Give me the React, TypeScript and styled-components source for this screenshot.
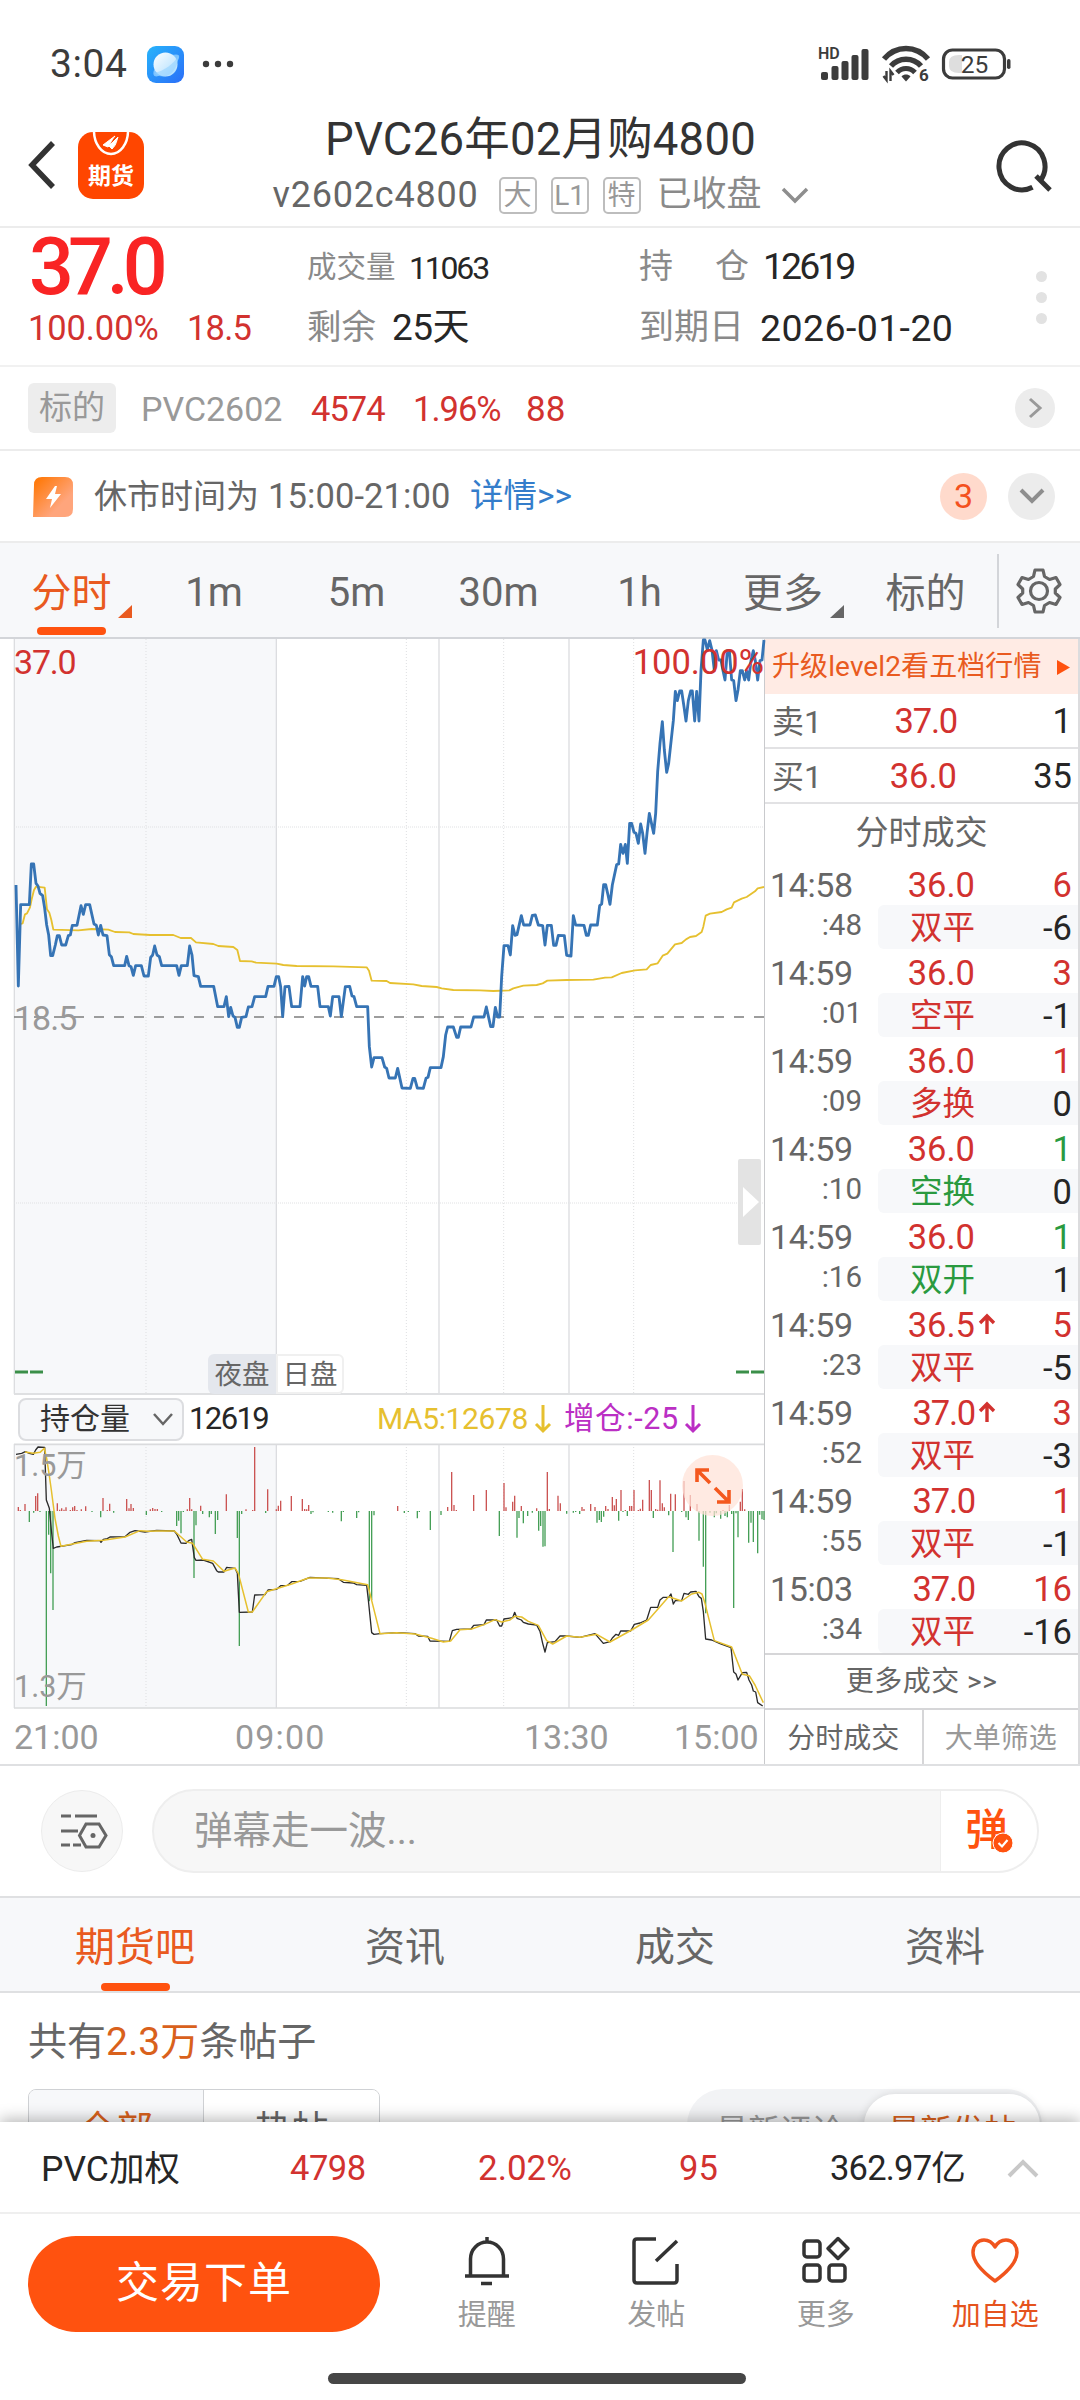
import React from 'react';
import styled, { createGlobalStyle, css } from 'styled-components';

const C = {
  red: '#d2322f',
  green: '#2a9a3f',
  orange: '#e95a20',
  accent: '#ff520f',
  ink: '#262626',
  mid: '#666666',
  soft: '#8a8a8a',
  mute: '#999999',
  line: '#dfe0e2',
  pane: '#f7f8fa',
  blue: '#3674b5',
  yellow: '#e6c02f',
  purple: '#bb2fc4',
};

const Global = createGlobalStyle`
  * { box-sizing: border-box; }
  html, body { margin: 0; padding: 0; background: #fff; }
  body { font-family: Roboto, "Noto Sans CJK SC", sans-serif; }
  svg { display: block; flex: none; overflow: visible; }
`;

const Page = styled.main`
  width: 1080px;
  height: 2400px;
  overflow: hidden;
  display: flex;
  flex-direction: column;
  background: #fff;
  position: relative;
`;

interface TextProps { $size?: number; $color?: string; $ls?: number; $weight?: number; $ml?: number; $w?: number; $align?: string }
const Text = styled.span<TextProps>`
  display: block;
  flex: none;
  white-space: nowrap;
  line-height: 1.2;
  font-size: ${p => p.$size ?? 34}px;
  color: ${p => p.$color ?? C.mid};
  letter-spacing: ${p => p.$ls ?? 0}px;
  font-weight: ${p => p.$weight ?? 400};
  margin-left: ${p => p.$ml ?? 0}px;
  ${p => p.$w !== undefined && css`width: ${p.$w}px;`}
  text-align: ${p => p.$align ?? 'left'};
`;

/* ---------- status bar ---------- */
const StatusBar = styled.header`
  height: 100px;
  flex: none;
  display: flex;
  align-items: center;
  padding: 28px 68px 0 50px;
`;
const Spacer = styled.div`flex: 1;`;
const AppDot = styled.div`margin: 0 18px 0 20px;`;
const StatusIcons = styled.div`display: flex; align-items: center; gap: 12px;`;

/* ---------- title ---------- */
const TitleBar = styled.div`
  height: 128px;
  flex: none;
  display: flex;
  border-bottom: 2px solid #ececec;
  padding: 0 27px 0 28px;
`;
const TitleSide = styled.div<{ $right?: boolean }>`
  width: 130px;
  display: flex;
  align-items: center;
  gap: 21px;
  padding-top: 4px;
  justify-content: ${p => (p.$right ? 'flex-end' : 'flex-start')};
`;
const TitleMid = styled.div`
  flex: 1;
  display: flex;
  flex-direction: column;
  align-items: center;
  padding-top: 13px;
`;
const SubTitle = styled.div`
  display: flex;
  align-items: center;
  height: 43px;
  margin-top: 6px;
`;
const Badge = styled.span<{ $first?: boolean }>`
  width: 38px;
  height: 37px;
  border: 2px solid #bdbdbd;
  border-radius: 5px;
  margin-left: ${p => (p.$first ? 20 : 14)}px;
  font-size: 28px;
  line-height: 33px;
  color: ${C.mute};
  text-align: center;
  white-space: nowrap;
`;
const Logo = styled.div`
  width: 66px;
  height: 67px;
  border-radius: 15px;
  background: #ff4600;
  overflow: hidden;
  display: flex;
  flex-direction: column;
  align-items: center;
`;
const LogoText = styled.span`
  color: #fff;
  font-size: 23px;
  font-weight: 700;
  line-height: 30px;
  margin-top: 3px;
`;

/* ---------- quote ---------- */
const Quote = styled.section`
  height: 139px;
  flex: none;
  display: grid;
  grid-template-columns: 279px 332px 390px 1fr;
  padding: 0 30px 0 28px;
  border-bottom: 2px solid #f1f1f1;
`;
const QuoteCol = styled.div<{ $top: number; $gap: number }>`
  display: flex;
  flex-direction: column;
  padding-top: ${p => p.$top}px;
  gap: ${p => p.$gap}px;
`;
const Line = styled.div`display: flex; align-items: center; height: 44px;`;
const BigPrice = styled.div`
  font-size: 79px;
  line-height: 78px;
  letter-spacing: -6px;
  font-weight: 500;
  padding-left: 1px;
  color: #f92424;
`;
const Dots = styled.div`
  display: flex;
  flex-direction: column;
  align-items: center;
  gap: 10px;
  padding: 43px 16px 0 0;
  justify-self: end;
  margin-right: -13px;
`;
const Dot = styled.i`width: 11px; height: 11px; border-radius: 50%; background: #e2e2e2;`;

const Row = styled.section<{ $h: number; $top?: number }>`
  height: ${p => p.$h}px;
  flex: none;
  display: flex;
  align-items: center;
  padding: 0 25px 0 28px;
  padding-top: ${p => p.$top ?? 0}px;
  border-bottom: 2px solid #ececec;
`;
const Figures = styled.div`display: flex; padding-top: 3px;`;
const Tag = styled.span`
  width: 88px;
  height: 50px;
  border-radius: 6px;
  background: #ededed;
  color: ${C.mute};
  font-size: 33px;
  line-height: 50px;
  text-align: center;
`;
const Round = styled.span<{ $d: number; $bg?: string; $mr?: number }>`
  width: ${p => p.$d}px;
  height: ${p => p.$d}px;
  border-radius: 50%;
  background: ${p => p.$bg ?? '#ececec'};
  display: flex;
  align-items: center;
  justify-content: center;
  margin-right: ${p => p.$mr ?? 0}px;
`;

/* ---------- period tabs ---------- */
const Periods = styled.nav`
  height: 96px;
  flex: none;
  display: grid;
  grid-template-columns: 143px 142px 143px 141px 141px 160px 127px 1fr;
  background: ${C.pane};
  border-bottom: 2px solid #d3d5d9;
`;
const Period = styled.div<{ $on?: boolean; $cjk?: boolean; $pr?: number }>`
  position: relative;
  display: flex;
  align-items: center;
  justify-content: center;
  padding-top: ${p => (p.$cjk ? 0 : 5)}px;
  padding-right: ${p => p.$pr ?? 0}px;
  font-size: 40px;
  color: ${p => (p.$on ? C.orange : C.mid)};
`;
const Corner = styled.i<{ $right: number }>`
  position: absolute;
  right: ${p => p.$right}px;
  top: 62px;
  border-bottom: 13px solid currentColor;
  border-left: 14px solid transparent;
`;
const Underline = styled.i<{ $left: string; $bottom: number }>`
  position: absolute;
  left: ${p => p.$left};
  bottom: ${p => p.$bottom}px;
  width: 69px;
  height: 8px;
  border-radius: 4px;
  background: ${C.accent};
`;
const GearCell = styled.div`
  display: flex;
  align-items: center;
  justify-content: center;
  border-left: 2px solid #d3d5d9;
  margin: 11px 1px 9px 0;
`;

/* ---------- market ---------- */
const Market = styled.section`
  height: 1127px;
  flex: none;
  display: grid;
  grid-template-columns: 750px 316px;
  padding-left: 14px;
  border-bottom: 2px solid ${C.line};
`;
const Charts = styled.div`display: flex; flex-direction: column; position: relative; min-width: 0;`;
const Overlay = styled.div<{ $x?: number; $r?: number; $y: number }>`
  position: absolute;
  ${p => (p.$r !== undefined ? `right: ${p.$r}px;` : `left: ${p.$x ?? 0}px;`)}
  top: ${p => p.$y}px;
`;
const Session = styled.div`display: flex;`;
const SessionTag = styled.span<{ $night?: boolean }>`
  width: 68px;
  height: 40px;
  font-size: 27.5px;
  line-height: 41px;
  text-align: center;
  color: ${C.mid};
  border-radius: ${p => (p.$night ? '6px 0 0 6px' : '0 6px 6px 0')};
  background: ${p => (p.$night ? '#e4e7ed' : '#fff')};
  box-shadow: ${p => (p.$night ? 'none' : 'inset 0 0 0 2px #f0f0f0')};
`;
const Handle = styled.div`
  width: 23px;
  height: 86px;
  border-radius: 2px;
  background: #e3e3e3;
  display: flex;
  align-items: center;
  padding-left: 5px;
`;
const Indicator = styled.div`
  height: 48px;
  display: flex;
  align-items: center;
  padding-left: 4px;
`;
const Select = styled.div`
  width: 166px;
  height: 43px;
  border: 2px solid #dcdde0;
  border-radius: 8px;
  background: ${C.pane};
  display: flex;
  align-items: center;
  justify-content: space-between;
  padding: 0 8px 0 20px;
  margin-right: 5px;
`;
const Axis = styled.div`
  flex: 1;
  display: grid;
  grid-template-columns: 221px 289px 150px 1fr;
  align-items: center;
`;
const ExpandBtn = styled.div`
  width: 61px;
  height: 61px;
  border-radius: 50%;
  background: rgba(255, 226, 215, 0.72);
`;

const Panel = styled.aside`
  display: flex;
  flex-direction: column;
  border-left: 1px solid #c9cacd;
  border-right: 2px solid #dcdcde;
`;
const Banner = styled.div`
  height: 55px;
  display: flex;
  align-items: center;
  background: #ffebe4;
  padding: 1px 8px 0 7px;
`;
const Level = styled.div`
  height: 55px;
  display: grid;
  grid-template-columns: 56px 129px 1fr;
  align-items: center;
  border-bottom: 2px solid #e2e2e4;
  padding: 3px 6px 0 7px;
`;
const PanelTitle = styled.div`
  height: 57px;
  display: flex;
  align-items: center;
  justify-content: center;
`;
const Tick = styled.div`
  height: 88px;
  display: grid;
  grid-template-columns: 113px 1fr;
  grid-template-rows: 44px 44px;
`;
const TickTime = styled.div<{ $sub?: boolean }>`
  display: flex;
  align-items: center;
  justify-content: ${p => (p.$sub ? 'flex-end' : 'flex-start')};
  padding: ${p => (p.$sub ? '0 16px 2px 0' : '4px 0 0 5px')};
`;
const TickData = styled.div<{ $sub?: boolean }>`
  display: grid;
  grid-template-columns: 97px 20px 1fr;
  align-items: center;
  padding: 0 6px 0 0;
  padding-top: ${p => (p.$sub ? 3 : 4)}px;
  background: ${p => (p.$sub ? C.pane : 'transparent')};
  border-radius: 6px 0 0 6px;
`;
const MoreTrades = styled.div`
  height: 55px;
  display: flex;
  align-items: center;
  justify-content: center;
  border-top: 2px solid #d6d6d8;
`;
const PanelTabs = styled.div`
  flex: 1;
  display: grid;
  grid-template-columns: 1fr 1fr;
  border-top: 2px solid #d6d6d8;
`;
const PanelTab = styled.div<{ $on?: boolean }>`
  display: flex;
  align-items: center;
  justify-content: center;
  font-size: 28px;
  padding-bottom: 3px;
  color: ${p => (p.$on ? C.mid : C.mute)};
  border-left: ${p => (p.$on ? '0' : '2px solid #d6d6d8')};
`;

/* ---------- comments ---------- */
const Danmu = styled.section`
  height: 130px;
  flex: none;
  display: flex;
  align-items: center;
  padding: 0 41px;
`;
const SettingBtn = styled.div`
  width: 82px;
  height: 82px;
  border-radius: 50%;
  background: #f7f7f7;
  border: 1px solid #ececec;
  display: flex;
  align-items: center;
  justify-content: center;
  padding-left: 4px;
`;
const InputBox = styled.div`
  flex: 1;
  height: 84px;
  margin-left: 29px;
  border: 2px solid #eeeeee;
  border-radius: 42px;
  background: #f7f7f7;
  display: flex;
  align-items: center;
  justify-content: space-between;
  padding-left: 40px;
  overflow: hidden;
`;
const Bullet = styled.div`
  position: relative;
  width: 97px;
  height: 80px;
  background: #fff;
  border-left: 1px solid #eee;
  font-size: 43px;
  font-weight: 500;
  line-height: 78px;
  padding-left: 24px;
  color: ${C.accent};
`;
const BulletMark = styled.div`position: absolute; left: 52px; top: 42px;`;
const BarTabs = styled.nav`
  height: 97px;
  flex: none;
  display: grid;
  grid-template-columns: repeat(4, 1fr);
  background: ${C.pane};
  border-top: 2px solid ${C.line};
  border-bottom: 2px solid ${C.line};
`;
const BarTab = styled.div<{ $on?: boolean }>`
  position: relative;
  display: flex;
  align-items: center;
  justify-content: center;
  font-size: 40px;
  padding-bottom: 2px;
  color: ${p => (p.$on ? C.orange : C.mid)};
`;
const PostCount = styled.div`
  font-size: 39px;
  line-height: 46px;
  color: ${C.mid};
  padding: 26px 0 0 28px;
  height: 96px;
  flex: none;
  em { font-style: normal; color: #d9611c; }
`;
const Filters = styled.div`
  display: flex;
  justify-content: space-between;
  padding: 0 38px 0 28px;
`;
const Segments = styled.div`
  width: 352px;
  height: 70px;
  border: 1px solid #cfd1d4;
  border-radius: 8px;
  display: grid;
  grid-template-columns: 1fr 1fr;
  overflow: hidden;
`;
const Segment = styled.div<{ $on?: boolean }>`
  font-size: 37px;
  line-height: 81px;
  text-align: center;
  color: ${p => (p.$on ? '#d9611c' : C.mid)};
  background: ${p => (p.$on ? C.pane : '#fff')};
  border-right: ${p => (p.$on ? '1px solid #cfd1d4' : '0')};
`;
const SortPill = styled.div`
  width: 355px;
  height: 72px;
  border-radius: 36px;
  background: #f2f3f5;
  display: grid;
  grid-template-columns: 177px 176px;
  padding-top: 5px;
`;
const SortItem = styled.div<{ $on?: boolean }>`
  height: 62px;
  border-radius: 31px;
  font-size: 32px;
  line-height: 74px;
  text-align: center;
  white-space: nowrap;
  color: ${p => (p.$on ? '#d9611c' : C.mute)};
  background: ${p => (p.$on ? '#fff' : 'transparent')};
  box-shadow: ${p => (p.$on ? '0 0 8px rgba(0,0,0,.12)' : 'none')};
  padding-left: ${p => (p.$on ? 0 : 9)}px;
`;

/* ---------- bottom ---------- */
const Dock = styled.footer`
  position: absolute;
  left: 0;
  right: 0;
  bottom: 0;
  height: 278px;
  background: #fff;
  box-shadow: 0 -3px 14px rgba(0, 0, 0, 0.28);
  display: flex;
  flex-direction: column;
`;
const IndexRow = styled.div`
  height: 92px;
  display: grid;
  grid-template-columns: 249px 188px 201px 151px 177px 1fr;
  align-items: center;
  padding: 4px 0 0 41px;
  border-bottom: 2px solid #efefef;
`;
const Actions = styled.div`
  height: 140px;
  display: grid;
  grid-template-columns: 352px 1fr;
  padding: 22px 0 22px 28px;
`;
const OrderBtn = styled.div`
  height: 96px;
  border-radius: 48px;
  background: ${C.accent};
  color: #fff;
  font-size: 43px;
  line-height: 94px;
  text-align: center;
  letter-spacing: 1px;
`;
const ActionList = styled.div`
  display: grid;
  grid-template-columns: repeat(4, 169.5px);
  padding-left: 22px;
`;
const Action = styled.div<{ $on?: boolean }>`
  display: flex;
  flex-direction: column;
  align-items: center;
  gap: 11px;
  font-size: 29px;
  line-height: 36px;
  color: ${p => (p.$on ? '#e5531d' : C.mute)};
`;
const HomeBar = styled.div`
  width: 418px;
  height: 11px;
  border-radius: 6px;
  background: #464646;
  margin: 19px 0 0 328px;
`;

/* ---------- chart data ---------- */
const join = (early: string, late: string) =>
  [
    ...early.split(' ').map(p => p.split(',').map(Number)),
    ...late.split(' ').map(p => { const [x, y] = p.split(',').map(Number); return [x + 1140, y]; }),
  ];
const toPoints = (pts: number[][]) => pts.map(p => p.join(',')).join(' ');

const price = toPoints(join(
  '48,765 55,1068 62,824 88,824 94,702 101,702 108,760 114,768 120,790 128,797 134,835 140,885 146,915 152,977 158,977 166,945 172,917 178,917 185,945 197,945 205,917 211,915 217,886 231,886 243,827 250,853 257,824 269,824 282,882 289,886 295,915 302,886 309,915 321,917 328,974 334,980 341,1007 374,1007 380,979 387,1007 393,1010 400,1036 407,1007 424,1007 432,1038 445,1038 452,982 458,975 464,948 471,975 478,980 485,1007 530,1007 537,1036 544,1007 562,1007 569,948 576,975 582,1037 595,1040 602,1069 641,1069 653,1130 672,1130 679,1100 686,1160 692,1132 699,1158 705,1162 712,1192 718,1192 725,1162 738,1160 745,1131 756,1130 764,1100 797,1100 804,1069 822,1069 829,1040 836,1040 842,1070 848,1160 855,1070 867,1069 875,1130 900,1130 908,1040 914,1068 920,1040 926,1040 933,1069 953,1069 960,1130 985,1130 991,1158 998,1100 1017,1100 1024,1160 1036,1070 1049,1069 1056,1098 1062,1100 1070,1130 1103,1130 1108,1250 1115,1311 1122,1283 1146,1283 1154,1311 1160,1315 1167,1344 1186,1344',
  '53,1315 66,1374 91,1375 99,1345 104,1345 112,1374 130,1375 138,1345 144,1342 151,1313 183,1313 190,1280 197,1215 203,1191 220,1191 230,1222 235,1222 242,1191 273,1191 281,1161 312,1161 319,1131 326,1163 332,1190 339,1190 346,1132 353,1161 359,1161 365,1040 372,947 384,947 391,975 398,887 405,916 411,914 424,857 431,885 450,885 457,856 466,855 475,885 488,887 495,945 502,886 514,886 521,946 528,946 535,916 553,917 560,976 573,978 580,857 587,885 612,886 619,916 625,916 632,885 652,885 659,827 665,822 671,764 677,764 684,795 690,823 697,765 710,704 716,702 722,643 729,670 736,643 742,700 749,580 755,580 762,607 768,610 775,640 782,582 788,610 795,670 801,610 808,550 821,610 827,550 833,425 840,340 847,275 853,360 860,427 866,400 880,272 886,184 892,212 899,183 905,183 912,230 918,273 925,212 932,183 937,183 944,273 950,184 957,273 963,122 970,30 975,30 982,60 989,32 996,60 1003,122 1009,62 1016,90 1023,90 1029,122 1035,150 1042,62 1048,62 1055,150 1061,152 1068,212 1074,180 1081,122 1087,122 1094,150 1100,122 1106,150 1113,92 1120,62 1126,92 1133,150 1140,92 1146,90 1152,30',
));
const average = toPoints(join(
  '62,882 68,880 75,853 81,850 90,832 95,808 102,780 108,770 134,773 141,838 148,848 154,870 160,899 235,901 275,897 325,899 345,906 388,907 400,912 450,915 520,915 542,924 573,924 588,937 640,942 655,948 700,951 712,960 720,993 755,994 768,998 830,1001 850,1005 890,1008 1000,1009 1100,1012 1107,1022 1115,1052 1160,1053',
  '30,1059 100,1063 125,1068 170,1071 185,1075 220,1080 300,1081 340,1083 388,1081 400,1075 430,1067 470,1065 488,1060 502,1052 560,1050 640,1049 675,1043 695,1042 725,1029 765,1021 800,1018 812,1005 833,1000 848,977 862,971 885,943 905,939 918,928 930,921 948,918 965,906 970,890 977,857 990,851 1025,846 1040,838 1055,833 1062,817 1085,806 1100,801 1125,784 1133,775 1152,771',
));
const openInterest = toPoints(join(
  '48,73 65,70 76,65 88,70 100,73 107,60 114,51 134,52 139,210 148,235 154,300 160,355 170,351 215,344 225,338 260,331 300,332 303,337 310,328 322,326 330,321 375,320 390,307 405,302 435,306 470,301 523,303 530,312 543,339 558,340 566,332 575,328 583,383 588,391 610,390 638,400 650,422 655,426 672,426 680,412 705,415 712,430 718,547 757,546 764,495 795,494 804,480 830,478 842,467 863,466 875,455 900,454 930,442 1015,446 1030,457 1060,459 1070,464 1100,466 1105,510 1115,608 1122,613 1140,611',
  '55,608 105,611 115,618 143,619 150,633 208,634 217,602 230,598 273,597 281,586 312,584 319,570 350,570 359,588 365,588 372,567 398,563 404,547 411,565 424,570 430,577 445,582 470,585 480,604 488,640 495,666 502,638 525,635 540,618 560,618 600,622 645,611 670,640 690,635 697,624 708,613 716,616 722,603 752,603 763,583 780,579 800,570 812,532 833,532 840,510 850,502 866,502 873,492 880,522 886,512 905,512 912,490 925,493 932,486 948,484 957,500 964,505 970,545 977,627 995,630 1020,641 1053,653 1061,726 1068,732 1074,750 1087,728 1100,727 1107,750 1115,765 1120,783 1127,786 1133,818 1148,828',
));
const ma5 = toPoints(join(
  '75,66 100,70 120,67 133,55 140,85 147,130 154,180 165,265 175,318 183,349 260,334 310,331 375,321 420,302 445,304 470,303 523,303 560,336 578,340 608,388 640,393 672,424 705,414 715,430 745,546 757,546 800,485 875,462 925,444 980,444 1025,449 1103,464 1140,611',
  '50,608 105,612 155,625 190,636 212,633 240,599 275,597 312,584 345,569 365,576 390,570 404,559 425,561 445,574 475,586 500,632 518,642 560,618 600,622 650,613 690,636 755,600 805,570 866,500 905,513 935,492 957,487 966,492 975,520 1003,632 1055,651 1087,733 1108,737 1125,765 1150,818',
));
const rises = join(
  '55,231 61,240 75,222 107,198 113,190 172,220 179,239 185,235 192,239 198,232 211,240 218,232 224,228 231,240 244,238 257,229 309,204 322,240 329,221 380,207 387,235 393,222 400,234 451,238 458,234 465,237 472,237 562,238 569,204 575,238 602,227 679,193 738,238 758,240 764,51 803,178 829,238 835,227 842,212 874,198 907,207 914,237 920,238 926,225',
  '53,228 203,231 215,126 222,225 229,240 281,195 319,180 372,159 378,232 398,215 404,197 424,228 470,235 502,126 508,237 534,197 541,220 606,231 612,237 632,222 645,231 677,228 684,237 697,201 703,226 709,207 723,180 736,240 749,228 755,228 762,180 775,240 781,236 788,209 808,150 814,180 827,237 833,239 840,151 847,220 853,232 872,191 886,193 912,153 931,195 951,222 1029,240 1048,225 1081,215 1087,177 1094,238',
);
const falls = join(
  '88,276 101,248 120,246 139,828 146,314 152,430 159,540 276,246 302,262 341,248 439,255 485,246 530,288 536,272 543,310 550,246 582,444 588,286 608,252 628,262 634,252 646,312 653,270 712,324 718,648 725,252 797,249 933,252 939,247 985,246 998,248 1024,274 1030,246 1070,264 1076,247 1108,514 1115,510 1122,256',
  '73,249 85,246 112,265 118,246 151,300 183,255 358,318 411,323 417,264 430,280 443,258 457,248 476,302 482,288 489,350 495,349 560,251 580,248 587,246 599,252 651,278 658,270 664,276 671,260 716,272 729,246 742,258 820,264 866,256 879,366 905,246 918,262 925,270 957,332 970,410 977,550 990,248 1003,262 1009,250 1022,266 1035,258 1042,262 1055,252 1061,534 1068,250 1074,322 1106,338 1113,278 1120,336 1133,370 1139,254 1146,268 1152,270',
);

const Grid = ({ top, bottom }: { top: number; bottom: number }) => (
  <g fill="none">
    <rect x="42" y={top} width="787" height={bottom - top} fill={C.pane} />
    {[438, 1219, 1511, 1901].map(x => (
      <line key={x} x1={x} x2={x} y1={top} y2={bottom} stroke="#dedfe1" strokeWidth="3" strokeDasharray="3 6" />
    ))}
    {[43, 829, 1317, 1707].map(x => (
      <line key={x} x1={x} x2={x} y1={top} y2={bottom} stroke="#dcdde0" strokeWidth="4" />
    ))}
  </g>
);

const PriceChart = () => (
  <svg width="751" height="756" viewBox="42 27 2253 2268">
    <Grid top={27} bottom={2292} />
    {[591, 1719].map(y => (
      <line key={y} x1="42" x2="2292" y1={y} y2={y} stroke="#e0e1e3" strokeWidth="3" strokeDasharray="3 3" />
    ))}
    <line x1="42" x2="2292" y1="1161" y2="1161" stroke="#7d7d7d" strokeWidth="5" strokeDasharray="30 30" />
    <line x1="42" x2="2292" y1="2292" y2="2292" stroke="#dfe0e2" strokeWidth="6" />
    <polyline points={average} fill="none" stroke={C.yellow} strokeWidth="5.5" strokeLinejoin="round" />
    <polyline points={price} fill="none" stroke={C.blue} strokeWidth="8.5" strokeLinejoin="round" />
  </svg>
);

const InterestChart = () => (
  <svg width="751" height="267" viewBox="42 39 2253 801">
    <Grid top={42} bottom={834} />
    <path d="M42 43H2292M42 834H2292" stroke="#dadbdd" strokeWidth="5" />
    {rises.map(([x, y]) => <line key={x} x1={x} x2={x} y1={y} y2="243" stroke="#cb5453" strokeWidth="4" />)}
    {falls.map(([x, y]) => <line key={x} x1={x} x2={x} y1="243" y2={y} stroke="#469f57" strokeWidth="4" />)}
    <polyline points={openInterest} fill="none" stroke="#2b2b2b" strokeWidth="4" strokeLinejoin="round" />
    <polyline points={ma5} fill="none" stroke={C.yellow} strokeWidth="4.5" strokeLinejoin="round" />
  </svg>
);

const Chevron = ({ d, w, h, color, sw = 3 }: { d: string; w: number; h: number; color: string; sw?: number }) => (
  <svg width={w} height={h} viewBox={`0 0 ${w} ${h}`} fill="none" stroke={color} strokeWidth={sw}><path d={d} /></svg>
);

const trades = [
  ['14:58', '36.0', '6', ':48', '双平', '-6'],
  ['14:59', '36.0', '3', ':01', '空平', '-1'],
  ['14:59', '36.0', '1', ':09', '多换', '0'],
  ['14:59', '36.0', '1', ':10', '空换', '0', 'down'],
  ['14:59', '36.0', '1', ':16', '双开', '1', 'down'],
  ['14:59', '36.5', '5', ':23', '双平', '-5', 'up'],
  ['14:59', '37.0', '3', ':52', '双平', '-3', 'up'],
  ['14:59', '37.0', '1', ':55', '双平', '-1'],
  ['15:03', '37.0', '16', ':34', '双平', '-16'],
];

const TradeRow = ({ t }: { t: string[] }) => {
  const tone = t[6] === 'down' ? C.green : C.red;
  const tight = t[1] === '37.0' ? -1.2 : 0;
  return (
    <Tick>
      <TickTime><Text $size={34} $ls={-0.4}>{t[0]}</Text></TickTime>
      <TickData>
        <Text $size={34.5} $color={C.red} $align="right" $ls={tight}>{t[1]}</Text>
        {t[6] === 'up' ? (
          <svg width="20" height="26" viewBox="0 0 20 26" fill="none" stroke={C.red} strokeWidth="3.4"><path d="M12 21V3M5 10l7-7 7 7" /></svg>
        ) : <i />}
        <Text $size={34.5} $color={tone} $align="right">{t[2]}</Text>
      </TickData>
      <TickTime $sub><Text $size={29.5}>{t[3]}</Text></TickTime>
      <TickData $sub>
        <Text $size={32.5} $color={tone} $align="right">{t[4]}</Text>
        <i />
        <Text $size={34.5} $color={C.ink} $align="right">{t[5]}</Text>
      </TickData>
    </Tick>
  );
};

export default function App() {
  return (
    <Page>
      <Global />
      <StatusBar>
        <Text $size={39} $color="#3c3c3c" $w={77} $ls={0.6}>3:04</Text>
        <AppDot>
          <svg width="37" height="37" viewBox="0 0 37 37">
            <defs>
              <linearGradient id="sky" x1="0" y1="0" x2="1" y2="1"><stop offset="0" stopColor="#27b4fb" /><stop offset="1" stopColor="#2b6ef8" /></linearGradient>
              <linearGradient id="planet" x1="0" y1="0" x2="1" y2="1"><stop offset="0" stopColor="#fff" /><stop offset="1" stopColor="#a9dcff" /></linearGradient>
            </defs>
            <rect width="37" height="37" rx="9" fill="url(#sky)" />
            <path d="M24 9c6-1 9-1 8 3-2 7-10 14-18 17-6 3-9 1-7-5" fill="#7cc3ff" />
            <circle cx="18.500" cy="18.500" r="12" fill="url(#planet)" />
            <path d="M7 27C17 25 27 18 31 10c1 8-5 20-14 20.500-4 .5-7-1-10-3.500z" fill="#8fd0ff" opacity=".55" />
          </svg>
        </AppDot>
        <svg width="32" height="8" viewBox="0 0 32 8" fill="#3c3c3c"><circle cx="4" cy="4" r="3.200" /><circle cx="16" cy="4" r="3.200" /><circle cx="28" cy="4" r="3.200" /></svg>
        <Spacer />
        <StatusIcons>
          <svg width="51" height="34" viewBox="0 0 51 34" fill="#3c3c3c">
            <text x="-1" y="12" fontSize="16" fontWeight="600" fontFamily="Roboto, sans-serif">HD</text>
            <rect x="2" y="25" width="7" height="8" rx="2" /><rect x="12.500" y="19" width="7" height="14" rx="2" />
            <rect x="22.500" y="14" width="7" height="19" rx="2" /><rect x="32.500" y="8" width="7" height="25" rx="2" /><rect x="42.500" y="2" width="7" height="31" rx="2" />
          </svg>
          <svg width="48" height="36" viewBox="0 0 48 36" fill="none" stroke="#3c3c3c">
            <path d="M2 13C14-1 34-1 46 13" strokeWidth="5.500" /><path d="M9 20c8-9 22-9 30 0" strokeWidth="5.500" /><path d="M15 26.500c5-5.500 13-5.500 18 0" strokeWidth="5" />
            <path d="M19.500 30.500c2.500-2.600 6.500-2.600 9 0L24 35.500z" fill="#3c3c3c" stroke="none" />
            <path d="M4.500 25v9l-3-4M8.500 35V25l3 4" strokeWidth="2.400" />
            <text x="37" y="35" fontSize="17" fontWeight="700" fill="#3c3c3c" stroke="none" fontFamily="Roboto, sans-serif">6</text>
          </svg>
          <svg width="70" height="32" viewBox="0 0 70 32">
            <rect x="1.500" y="2" width="61" height="28" rx="9" fill="none" stroke="#3c3c3c" strokeWidth="3.200" />
            <path d="M17 7h3v18h-3q-10 0-10-7v-4q0-7 10-7z" fill="#dedede" />
            <text x="32.500" y="24.500" fontSize="24.500" textAnchor="middle" fill="#3c3c3c" fontFamily="Roboto, sans-serif">25</text>
            <rect x="65" y="11" width="3.500" height="10" rx="1.700" fill="#3c3c3c" />
          </svg>
        </StatusIcons>
      </StatusBar>

      <TitleBar>
        <TitleSide>
          <Chevron d="M25 2L4 24L25 46" w={29} h={48} color="#333" sw={5.5} />
          <Logo>
            <svg width="44" height="27" viewBox="0 0 44 27" fill="none">
              <path d="M5 0a17 23 0 0 0 34 0" stroke="#fff" strokeWidth="2.500" transform="translate(0 -1)" />
              <path d="M14 13L26 4c-5 6-4 8-7 11zM20 14L29 5c-2 6-2 8-6 12z" fill="#fff" stroke="#fff" strokeWidth="1" />
            </svg>
            <LogoText>期货</LogoText>
          </Logo>
        </TitleSide>
        <TitleMid>
          <Text $size={45.5} $color="#333" $ls={0.2}>PVC26年02月购4800</Text>
          <SubTitle>
            <Text $size={36} $ls={0.8}>v2602c4800</Text>
            <Badge $first>大</Badge><Badge>L1</Badge><Badge>特</Badge>
            <Text $size={35} $color={C.soft} $ml={16}>已收盘</Text>
            <Text as="div" $ml={19}><Chevron d="M2 2L14 14L26 2" w={28} h={17} color="#8e8e8e" sw={3.5} /></Text>
          </SubTitle>
        </TitleMid>
        <TitleSide $right>
          <svg width="54" height="54" viewBox="0 0 54 54" fill="none" stroke="#333" strokeWidth="5">
            <path d="M33.500 49.300A23 23.500 0 1 1 41 43" /><path d="M37 38L51 52" />
          </svg>
        </TitleSide>
      </TitleBar>

      <Quote>
        <QuoteCol $top={0} $gap={1}>
          <BigPrice>37.0</BigPrice>
          <Line>
            <Text $size={34.5} $color={C.red} $ls={-0.1} $w={159}>100.00%</Text>
            <Text $size={34.5} $color={C.red} $ls={-0.8}>18.5</Text>
          </Line>
        </QuoteCol>
        <QuoteCol $top={18} $gap={16}>
          <Line><Text $size={29.5} $color={C.soft} $w={102}>成交量</Text><Text $size={32} $color={C.ink} $ls={-2.2}>11063</Text></Line>
          <Line><Text $size={34.5} $color={C.soft} $w={85}>剩余</Text><Text $size={37} $color={C.ink} $ls={-0.6}>25天</Text></Line>
        </QuoteCol>
        <QuoteCol $top={16} $gap={18}>
          <Line><Text $size={34} $color={C.soft} $w={76}>持</Text><Text $size={34} $color={C.soft} $w={48}>仓</Text><Text $size={37.5} $color={C.ink} $ls={-3}>12619</Text></Line>
          <Line><Text $size={35} $color={C.soft} $w={121}>到期日</Text><Text $size={37.5} $color={C.ink} $ls={0.4}>2026-01-20</Text></Line>
        </QuoteCol>
        <Dots><Dot /><Dot /><Dot /></Dots>
      </Quote>

      <Row $h={84}>
        <Tag>标的</Tag>
        <Figures>
          <Text $size={34} $color={C.mute} $ml={25} $w={170}>PVC2602</Text>
          <Text $size={34.5} $color={C.red} $w={102} $ls={-1}>4574</Text>
          <Text $size={34.5} $color={C.red} $w={113} $ls={-1}>1.96%</Text>
          <Text $size={35} $color={C.red}>88</Text>
        </Figures>
        <Spacer />
        <Round $d={40}><Chevron d="M3 2L13 11L3 20" w={16} h={22} color="#999" /></Round>
      </Row>

      <Row $h={92} $top={1}>
        <svg width="40" height="40" viewBox="0 0 40 40" style={{ marginLeft: 5 }}>
          <defs><linearGradient id="flash" x1="0" y1="0" x2="1" y2="1"><stop offset=".1" stopColor="#ff7a0c" /><stop offset=".7" stopColor="#ffa57c" /></linearGradient></defs>
          <path d="M9 0H32q8 0 8 8V32q0 8-8 8H0L1 8Q1 0 9 0z" fill="url(#flash)" />
          <path d="M22 9L13 22h6l-2 9 11-14h-6l2-8z" fill="#fff" />
        </svg>
        <Text $size={33} $ml={21} $w={174}>休市时间为</Text>
        <Text $size={34.5} $ls={0.1} $w={202}>15:00-21:00</Text>
        <Text $size={33.5} $color="#347dcb">详情&gt;&gt;</Text>
        <Spacer />
        <Round $d={47} $bg="#ffdacc" $mr={21}><Text $size={34} $color="#f4511e">3</Text></Round>
        <Round $d={47}><Chevron d="M2 2L13 13L24 2" w={26} h={17} color="#8e8e8e" sw={4} /></Round>
      </Row>

      <Periods>
        <Period $on $cjk>分时<Corner $right={11} /><Underline $left="37px" $bottom={2} /></Period>
        <Period>1m</Period><Period>5m</Period><Period>30m</Period><Period>1h</Period>
        <Period $cjk $pr={14}>更多<Corner $right={26} /></Period>
        <Period $cjk $pr={16}>标的</Period>
        <GearCell>
          <svg width="44" height="46" viewBox="0 0 44 46" fill="none" stroke="#666" strokeWidth="3.200" strokeLinejoin="round">
            <path d="M18 2h8l1.500 6.500 5 3L39 9.500l4 7-4.700 4.500v4L43 29.500l-4 7-6.500-2-5 3L26 44h-8l-1.500-6.500-5-3-6.500 2-4-7L5.700 25v-4L1 16.500l4-7 6.500 2 5-3z" />
            <circle cx="22" cy="23" r="8.500" />
          </svg>
        </GearCell>
      </Periods>

      <Market>
        <Charts>
          <PriceChart />
          <Indicator>
            <Select>
              <Text $size={30} $color="#333">持仓量</Text>
              <Chevron d="M2 2L11 12L20 2" w={22} h={15} color="#666" sw={2.5} />
            </Select>
            <Text $size={31} $color={C.ink} $ls={-1.6} $w={188}>12619</Text>
            <Text $size={30} $color={C.yellow} $w={158} $ls={-0.4}>MA5:12678</Text>
            <Chevron d="M8 1V27M1 20L8 27L15 20" w={16} h={30} color={C.yellow} />
            <Text $size={30.5} $color={C.purple} $ml={13} $w={121} $ls={0.6}>增仓:-25</Text>
            <Chevron d="M8 1V27M1 20L8 27L15 20" w={16} h={30} color={C.purple} />
          </Indicator>
          <InterestChart />
          <Axis>
            {['21:00', '09:00', '13:30', '15:00'].map((t, i) => <Text key={t} $size={34} $color={C.mute} $ls={i === 1 ? 1.2 : 0}>{t}</Text>)}
          </Axis>
          <Overlay $x={0} $y={3}><Text $size={34} $color={C.red} $ls={-1.2}>37.0</Text></Overlay>
          <Overlay $r={0} $y={3}><Text $size={34.5} $color={C.red}>100.00%</Text></Overlay>
          <Overlay $x={0} $y={359}><Text $size={34} $color={C.mute} $ls={-1}>18.5</Text></Overlay>
          <Overlay $x={1} $y={731}><Chevron d="M0 2H13M15 2H28" w={28} h={4} color="#3b8f49" sw={3} /></Overlay>
          <Overlay $x={722} $y={731}><Chevron d="M0 2H13M15 2H28" w={28} h={4} color="#3b8f49" sw={3} /></Overlay>
          <Overlay $x={194} $y={715}><Session><SessionTag $night>夜盘</SessionTag><SessionTag>日盘</SessionTag></Session></Overlay>
          <Overlay $x={724} $y={520}><Handle><svg width="16" height="30" viewBox="0 0 16 30" fill="#fff"><path d="M0 0L16 15L0 30z" /></svg></Handle></Overlay>
          <Overlay $x={0} $y={809}><Text $size={30.5} $color={C.mute}>1.5万</Text></Overlay>
          <Overlay $x={0} $y={1030}><Text $size={30.5} $color={C.mute}>1.3万</Text></Overlay>
          <Overlay $x={668} $y={816}>
            <ExpandBtn>
              <svg width="61" height="61" viewBox="0 0 61 61" fill="none" stroke="#f4581e" strokeWidth="3.600"><path d="M28 28L15 15M15 27V15H27M33 33L47 47M47 35V47H35" /></svg>
            </ExpandBtn>
          </Overlay>
        </Charts>

        <Panel>
          <Banner>
            <Text $size={28} $color={C.orange} $ls={0.1}>升级level2看五档行情</Text>
            <Spacer />
            <svg width="13" height="15" viewBox="0 0 13 15" fill={C.accent}><path d="M0 0L13 7.500L0 15z" /></svg>
          </Banner>
          <Level><Text $size={32}>卖1</Text><Text $size={34.5} $color={C.red} $align="right" $ls={-1.2}>37.0</Text><Text $size={34.5} $color={C.ink} $align="right">1</Text></Level>
          <Level><Text $size={32}>买1</Text><Text $size={34.5} $color={C.red} $align="right">36.0</Text><Text $size={34.5} $color={C.ink} $align="right">35</Text></Level>
          <PanelTitle><Text $size={33}>分时成交</Text></PanelTitle>
          {trades.map((t, i) => <TradeRow key={i} t={t} />)}
          <MoreTrades><Text $size={28} $ls={0.5}>更多成交 &gt;&gt;</Text></MoreTrades>
          <PanelTabs><PanelTab $on>分时成交</PanelTab><PanelTab>大单筛选</PanelTab></PanelTabs>
        </Panel>
      </Market>

      <Danmu>
        <SettingBtn>
          <svg width="46" height="36" viewBox="0 0 46 36" fill="none" stroke="#666" strokeWidth="3">
            <path d="M0 3H10M14 3H36M0 18H17M0 32H9M12 32H20" />
            <path d="M25 11H38L45 22.500L38 34H25L18.500 22.500z" /><circle cx="32" cy="22.500" r="2.500" fill="#666" stroke="none" />
          </svg>
        </SettingBtn>
        <InputBox>
          <Text $size={38.5} $color={C.mute}>弹幕走一波...</Text>
          <Bullet>弹
            <BulletMark>
              <svg width="20" height="20" viewBox="0 0 20 20"><circle cx="10" cy="10" r="10" fill={C.accent} stroke="#fff" strokeWidth="1" /><path d="M5.500 10L9 13.500L14.500 7" fill="none" stroke="#fff" strokeWidth="2.200" /></svg>
            </BulletMark>
          </Bullet>
        </InputBox>
      </Danmu>

      <BarTabs>
        <BarTab $on>期货吧<Underline $left="101px" $bottom={0} /></BarTab>
        <BarTab>资讯</BarTab><BarTab>成交</BarTab><BarTab>资料</BarTab>
      </BarTabs>
      <PostCount>共有<em>2.3万</em>条帖子</PostCount>
      <Filters>
        <Segments><Segment $on>全部</Segment><Segment>热帖</Segment></Segments>
        <SortPill><SortItem>最新评论</SortItem><SortItem $on>最新发帖</SortItem></SortPill>
      </Filters>

      <Dock>
        <IndexRow>
          <Text $size={35.5} $color={C.ink}>PVC加权</Text>
          <Text $size={34.5} $color={C.red} $ls={-0.5}>4798</Text>
          <Text $size={35} $color={C.red}>2.02%</Text>
          <Text $size={34.5} $color={C.red}>95</Text>
          <Text $size={34.5} $color={C.ink} $ls={-0.8}>362.97亿</Text>
          <Chevron d="M2 17L16 3L30 17" w={32} h={20} color="#c8c8c8" sw={4} />
        </IndexRow>
        <Actions>
          <OrderBtn>交易下单</OrderBtn>
          <ActionList>
            <Action>
              <svg width="48" height="50" viewBox="0 0 48 50" fill="none" stroke="#333" strokeWidth="3.500">
                <path d="M24 1V6M7.500 40V23a16.500 17 0 0 1 33 0V40M2 40H46M18 47.500H29" />
              </svg>提醒
            </Action>
            <Action>
              <svg width="50" height="50" viewBox="0 0 50 50" fill="none" stroke="#333" strokeWidth="3.500" strokeLinejoin="round">
                <path d="M25 3H6Q3 3 3 6V44Q3 47 6 47H43Q46 47 46 44V28M46 5L25 25" />
              </svg>发帖
            </Action>
            <Action>
              <svg width="50" height="50" viewBox="0 0 50 50" fill="none" stroke="#333" strokeWidth="3.500" strokeLinejoin="round">
                <rect x="3" y="5" width="16" height="16" rx="3" /><rect x="3" y="29" width="16" height="16" rx="3" /><rect x="28" y="29" width="16" height="16" rx="3" />
                <path d="M37 2.500L47 12.500L37 22.500L27 12.500z" />
              </svg>更多
            </Action>
            <Action $on>
              <svg width="50" height="50" viewBox="0 0 50 50" fill="none" stroke="#f0541d" strokeWidth="3.500" strokeLinejoin="round">
                <path d="M25 45C10 34 3 25 3 16.500 3 9 8 4 14 4c5 0 8.500 2.500 11 7 2.500-4.500 6-7 11-7 6 0 11 5 11 12.500C47 25 40 34 25 45z" />
              </svg>加自选
            </Action>
          </ActionList>
        </Actions>
        <HomeBar />
      </Dock>
    </Page>
  );
}
